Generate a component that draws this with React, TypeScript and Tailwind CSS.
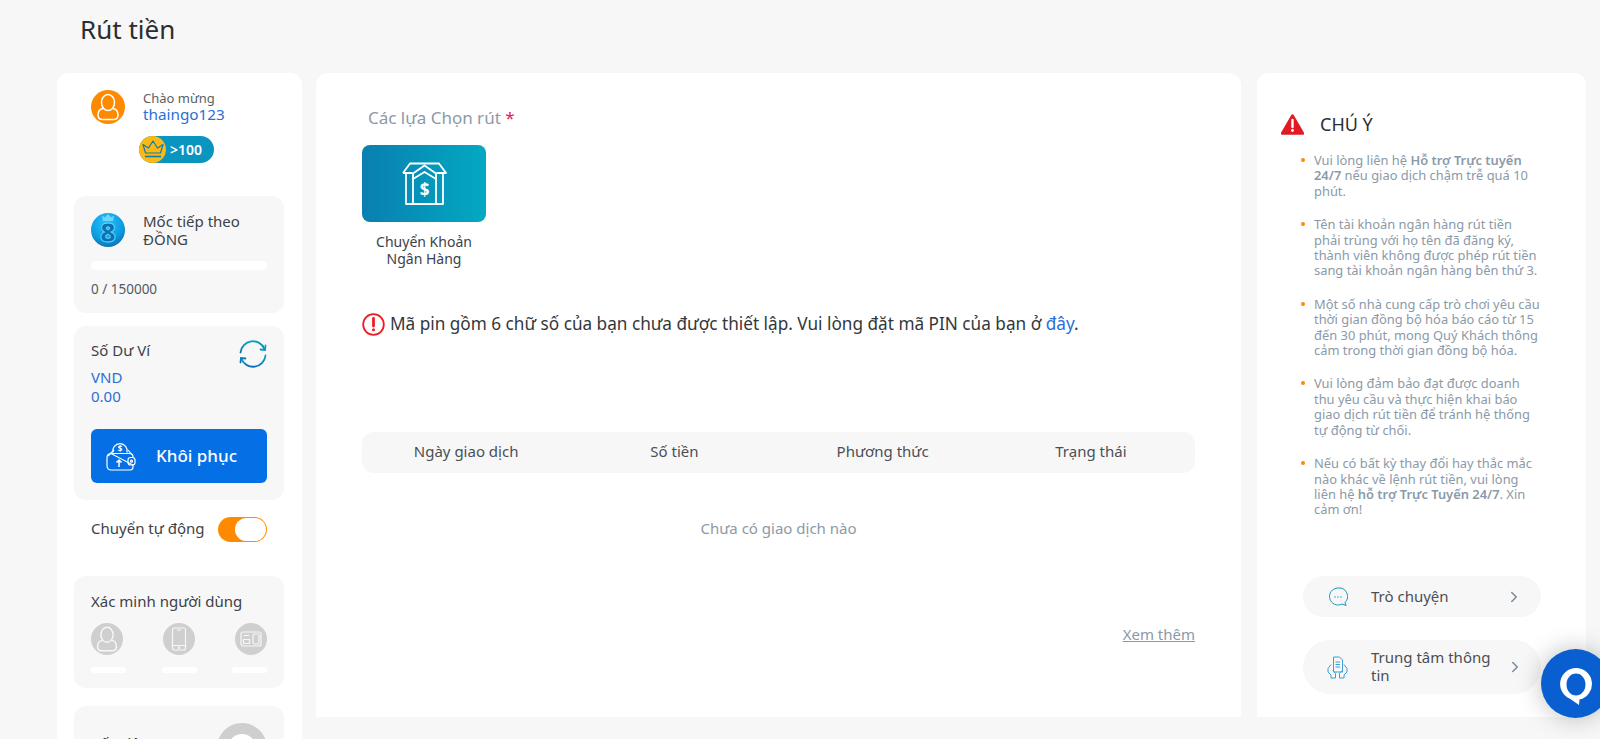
import { ChevronRight } from 'lucide-react';

const notes = [
  <>Vui lòng liên hệ <b className="font-semibold">Hỗ trợ Trực tuyến 24/7</b> nếu giao dịch chậm trễ quá 10 phút.</>,
  <>Tên tài khoản ngân hàng rút tiền phải trùng với họ tên đã đăng ký, thành viên không được phép rút tiền sang tài khoản ngân hàng bên thứ 3.</>,
  <>Một số nhà cung cấp trò chơi yêu cầu thời gian đồng bộ hóa báo cáo từ 15 đến 30 phút, mong Quý Khách thông cảm trong thời gian đồng bộ hóa.</>,
  <>Vui lòng đảm bảo đạt được doanh thu yêu cầu và thực hiện khai báo giao dịch rút tiền để tránh hệ thống tự động từ chối.</>,
  <>Nếu có bất kỳ thay đổi hay thắc mắc nào khác về lệnh rút tiền, vui lòng liên hệ <b className="font-semibold">hỗ trợ Trực Tuyến 24/7</b>. Xin cảm ơn!</>,
];

function UserIcon({ size = 34, color = 'white' }: { size?: number; color?: string }) {
  return (
    <svg width={size} height={size} viewBox="0 0 34 34" fill="none" stroke={color} strokeWidth="1.500">
      <ellipse cx="17" cy="12.500" rx="6.500" ry="8" />
      <path d="M12 18.500c-3 .5-5 3-5 6.500 0 3 2 4.500 4.500 4.500h11c2.500 0 4.500-1.500 4.500-4.500 0-3.500-2-6-5-6.500" />
    </svg>
  );
}

function BankIcon() {
  return (
    <svg width="45" height="43" viewBox="0 0 45 43" fill="none" stroke="white" strokeWidth="1.800" strokeLinejoin="round">
      <path d="M1 11L8 1.500h29L44 11h-9.500M1 11h9.500" />
      <path d="M4 11v31h37V11" />
      <path d="M11 42V11.500L22.500 3.500 34 11.500V42" />
      <path d="M11 17l11.500-7L34 17" />
      <text x="22.500" y="34" textAnchor="middle" fontSize="17" fontWeight="700" fill="white" stroke="none" fontFamily="Noto Sans, sans-serif">$</text>
    </svg>
  );
}

function WalletIcon() {
  return (
    <svg width="30" height="30" viewBox="0 0 30 30" fill="none" stroke="white" strokeWidth="1.200">
      <path d="M7 11.500a7.200 7.200 0 1 1 14 0" />
      <text x="14" y="10.500" textAnchor="middle" fontSize="8" fontWeight="700" fill="white" stroke="none" fontFamily="Noto Sans, sans-serif">$</text>
      <path d="M2 15l6-6M26 14l-4-5" />
      <path d="M5 12.500h19a3 3 0 0 1 3 3v1M27 24v2a3 3 0 0 1-3 3H5a4 4 0 0 1-4-4V16a4 4 0 0 1 4-3.500z" />
      <rect x="22" y="16.500" width="7" height="7.500" rx="2.500" />
      <circle cx="25.500" cy="20.200" r="1" />
      <path d="M13 26v-7M10.500 21.500L13 19l2.500 2.500" strokeWidth="1.500" />
    </svg>
  );
}

function RefreshIcon() {
  return (
    <svg width="28" height="28" viewBox="0 0 28 28" fill="none" stroke="url(#rf)" strokeWidth="1.800" strokeLinecap="round">
      <defs>
        <linearGradient id="rf" x1="0" y1="0" x2="0" y2="1">
          <stop offset="0" stopColor="#05a6c0" />
          <stop offset="1" stopColor="#0a6fb5" />
        </linearGradient>
      </defs>
      <path d="M1.500 12.500A12.500 12.500 0 0 1 25.500 9" />
      <path d="M26.500 15.500A12.500 12.500 0 0 1 2.500 19" />
      <path d="M21.500 9.500l4.500.5.500-4.500M6.500 18.500L2 18l-.5 4.500" />
    </svg>
  );
}

function Coin() {
  return (
    <div className="relative flex h-[34px] w-[34px] items-center justify-center rounded-full bg-[radial-gradient(circle_at_45%_30%,#22c4ff,#0d9be0_55%,#0a6aa8_85%,#07486f)]">
      <span className="mt-[3px] text-[27px] font-black leading-none text-[#0d6fb0] [-webkit-text-stroke:1px_#5fd2fb]">8</span>
      <svg width="12" height="7" viewBox="0 0 12 7" className="absolute left-[11px] top-[1px]" fill="#6fd6fb">
        <path d="M1 7L0 1.500l3 2L6 0l3 3.500 3-2L11 7z" />
      </svg>
    </div>
  );
}

export default function App() {
  return (
    <div className="h-screen overflow-hidden bg-[#f7f7f7] font-['Noto_Sans',sans-serif] text-[#3d4248]">
      <h1 className="pl-[80px] pt-[11px] h-[73px] text-[26px] leading-[36px] font-normal text-[#2a2e32]">Rút tiền</h1>
      <div className="flex items-start gap-[14px] pl-[57px]">
        {/* Sidebar */}
        <aside className="w-[245px] shrink-0 h-[700px] rounded-t-xl bg-white pl-[17px] pr-[18px]">
          <div className="flex h-[123px] gap-[18px] pl-[17px] pt-[17px]">
            <div className="h-[34px] w-[34px] rounded-full bg-[#ff8a00]">
              <UserIcon />
            </div>
            <div>
              <p className="text-[13px] leading-[17px] text-[#5a5f65]">Chào mừng</p>
              <p className="-mt-[2px] text-[15.3px] leading-[18px] text-[#2a6fd6]">thaingo123</p>
              <div className="mt-[13px] -ml-[4px] flex h-[27px] w-[75px] items-center rounded-full bg-[#0a94c0]">
                <div className="flex h-[27px] w-[27px] items-center justify-center rounded-full bg-[#fdb813]">
                  <svg width="22" height="19" viewBox="0 0 22 19" fill="none" stroke="#0a7fb0" strokeWidth="1.200" strokeLinejoin="round">
                    <path d="M3.500 13L1 4.500l5.500 3.500L11 1l4.500 7L21 4.500 18.500 13z" />
                    <path d="M3 16.500h16" strokeWidth="1.600" />
                  </svg>
                </div>
                <span className="ml-[4px] text-[14px] font-semibold text-white">&gt;100</span>
              </div>
            </div>
          </div>

          <section className="h-[117px] rounded-xl bg-[#f7f7f7] px-[17px] pt-[17px]">
            <div className="flex gap-[18px]">
              <Coin />
              <p className="-mt-[1px] text-[15px] leading-[18px]">Mốc tiếp theo<br />ĐỒNG</p>
            </div>
            <div className="mt-[13px] h-[9px] rounded-full bg-white" />
            <p className="mt-[10px] text-[13.5px] leading-[18px] text-[#55595e]">0 / 150000</p>
          </section>

          <section className="mt-[13px] h-[174px] rounded-xl bg-[#f7f7f7] px-[17px] pt-[14px]">
            <div className="flex justify-between">
              <p className="text-[15px] leading-[20px]">Số Dư Ví</p>
              <RefreshIcon />
            </div>
            <p className="text-[15px] leading-[19px] text-[#2a6fd6]">VND<br />0.00</p>
            <button className="mt-[23px] flex h-[54px] w-full items-center rounded-md bg-[#0570e6] pl-[15px] text-white">
              <WalletIcon />
              <span className="ml-[20px] text-[17px] font-medium">Khôi phục</span>
            </button>
          </section>

          <div className="flex h-[76px] items-start justify-between px-[17px] pt-[17px]">
            <span className="text-[15px] leading-[22px]">Chuyển tự động</span>
            <div className="flex h-[25px] w-[49px] justify-end rounded-full bg-[#ff8a00] p-[1px]">
              <div className="h-[23px] w-[31px] rounded-full bg-white" />
            </div>
          </div>

          <section className="h-[112px] rounded-xl bg-[#f7f7f7] px-[17px] pt-[14px]">
            <p className="text-[15px] leading-[22px]">Xác minh người dùng</p>
            <div className="mt-[11px] flex justify-between">
              <div className="h-[32px] w-[32px] rounded-full bg-[#cfcfcf]">
                <UserIcon size={32} color="#f7f7f7" />
              </div>
              <div className="flex h-[32px] w-[32px] items-center justify-center rounded-full bg-[#cfcfcf]">
                <svg width="16" height="24" viewBox="0 0 16 24" fill="none" stroke="#f7f7f7" strokeWidth="1.200">
                  <rect x="1.500" y="1" width="13" height="22" rx="2" />
                  <path d="M1.500 18.500h13M6 3h4" />
                  <circle cx="8" cy="20.800" r=".6" />
                </svg>
              </div>
              <div className="flex h-[32px] w-[32px] items-center justify-center rounded-full bg-[#cfcfcf]">
                <svg width="22" height="18" viewBox="0 0 22 18" fill="none" stroke="#f7f7f7" strokeWidth="1.200">
                  <rect x="1" y="2" width="20" height="14" rx="2" />
                  <rect x="13" y="4" width="6" height="10" rx="1.500" />
                  <path d="M3.500 5.500h6M3.500 9.500h6v4h-6z" />
                </svg>
              </div>
            </div>
            <div className="mt-[12px] flex justify-between">
              <div className="h-[6px] w-[35px] rounded-full bg-white" />
              <div className="h-[6px] w-[35px] rounded-full bg-white" />
              <div className="h-[6px] w-[35px] rounded-full bg-white" />
            </div>
          </section>

          <section className="mt-[18px] h-[120px] rounded-xl bg-[#f7f7f7] px-[17px] pt-[17px]">
            <div className="flex items-start justify-between">
              <p className="mt-[9px] text-[15px] leading-[22px]">Cấp độ VIP</p>
              <div className="h-[50px] w-[50px] rounded-full border-[11px] border-[#cfcfcf] bg-white" />
            </div>
          </section>
        </aside>

        {/* Main */}
        <main className="flex h-[644px] w-[925px] shrink-0 flex-col rounded-t-xl bg-white px-[46px]">
          <p className="mt-[33px] pl-[6px] text-[17px] leading-[24px] text-[#8b9aa8]">
            Các lựa Chọn rút <span className="text-[#e8175d]">*</span>
          </p>
          <div className="mt-[15px] w-[124px]">
            <div className="flex h-[77px] items-center justify-center rounded-lg bg-gradient-to-r from-[#0a7fb0] to-[#03a9c2]">
              <BankIcon />
            </div>
            <p className="mt-[11px] text-center text-[14px] leading-[17px]">Chuyển Khoản<br />Ngân Hàng</p>
          </div>
          <div className="mt-[45px] flex items-center gap-[5px]">
            <svg width="23" height="23" viewBox="0 0 23 23" fill="none" className="shrink-0">
              <circle cx="11.500" cy="11.500" r="10.300" stroke="#ef1c25" strokeWidth="1.800" />
              <path d="M11.500 5.500v7.500" stroke="#ef1c25" strokeWidth="2.800" strokeLinecap="round" />
              <circle cx="11.500" cy="16.800" r="1.500" fill="#ef1c25" />
            </svg>
            <p className="text-[17.2px] leading-[24px] text-[#33373b]">
              Mã pin gồm 6 chữ số của bạn chưa được thiết lập. Vui lòng đặt mã PIN của bạn ở <span className="text-[#2a6fd6]">đây</span>.
            </p>
          </div>
          <div className="mt-[96px] grid h-[41px] grid-cols-4 items-center rounded-xl bg-[#f7f7f7] pb-[2px] text-center text-[15px] text-[#4a4f55]">
            <span>Ngày giao dịch</span>
            <span>Số tiền</span>
            <span>Phương thức</span>
            <span>Trạng thái</span>
          </div>
          <p className="mt-[44px] text-center text-[15px] leading-[22px] text-[#8b9aa8]">Chưa có giao dịch nào</p>
          <p className="mt-[84px] text-right text-[15px] leading-[22px] text-[#8b9aa8] underline">Xem thêm</p>
        </main>

        {/* Notes */}
        <aside className="ml-[2px] flex h-[644px] w-[329px] shrink-0 flex-col rounded-t-xl bg-white pl-[24px]">
          <div className="mt-[40px] flex h-[22px] items-center gap-[16px]">
            <svg width="23" height="21" viewBox="0 0 23 21">
              <path d="M11.500 1.500L22 19.500H1z" fill="#e01b24" stroke="#e01b24" strokeWidth="2.500" strokeLinejoin="round" />
              <path d="M11.500 6v7" stroke="white" strokeWidth="2.400" strokeLinecap="round" />
              <circle cx="11.500" cy="16.500" r="1.400" fill="white" />
            </svg>
            <span className="text-[18px] text-[#2a2e32]">CHÚ Ý</span>
          </div>
          <ul className="mt-[18px] w-[260px] space-y-[18px] pl-[20px] text-[12.9px] leading-[15.4px] text-[#8b9aa8]">
            {notes.map((n, i) => (
              <li key={i} className="relative pl-[13px]">
                <span className="absolute left-0 top-[5px] h-[4px] w-[4px] rounded-full bg-[#ff8a00]" />
                {n}
              </li>
            ))}
          </ul>
          <div className="mt-auto mb-[23px] ml-[22px] w-[238px]">
            <div className="flex h-[41px] items-center rounded-full bg-[#f7f7f7] pl-[25px] pr-[18px]">
              <svg width="20" height="20" viewBox="0 0 20 20" fill="none" stroke="#1b95c9" strokeWidth="1">
                <path d="M10 1a8.500 8.500 0 1 0 4 16l4 1.500-1-3A8.500 8.500 0 0 0 10 1z" />
                <path d="M6.500 10h1M9.500 10h1M12.500 10h1" strokeWidth="1.400" />
              </svg>
              <span className="ml-[23px] flex-1 text-[15px] text-[#4a4f55]">Trò chuyện</span>
              <ChevronRight size={18} className="text-[#7a8a98]" />
            </div>
            <div className="mt-[23px] flex h-[54px] items-center rounded-full bg-[#f7f7f7] pl-[24px] pr-[17px]">
              <svg width="21" height="23" viewBox="0 0 21 23" fill="none" stroke="#3aa0d8" strokeWidth="1">
                <path d="M6.500 1h6l3 3v12h-9z" />
                <path d="M8.500 6h4.500M8.500 8.500h4.500M8.500 11h4.500" />
                <path d="M4 8.500L1 12.500v3.500l3 3v3h4.500v-4.500L6 14.500M17 8.500l3 4v3.500l-3 3v3h-4.500v-4.500L15 14.500" />
              </svg>
              <span className="ml-[23px] -mt-[2px] flex-1 text-[15px] leading-[18px] text-[#4a4f55]">Trung tâm thông tin</span>
              <ChevronRight size={18} className="text-[#7a8a98]" />
            </div>
          </div>
        </aside>
      </div>

      {/* Floating chat bubble */}
      <div className="fixed right-[-10px] top-[649px] flex h-[69px] w-[69px] items-start justify-center rounded-full bg-[#0a5fd0] pt-[19px] shadow-[0_0_24px_rgba(0,0,0,0.25)]">
        <svg width="32" height="37" viewBox="0 0 32 37">
          <path fillRule="evenodd" fill="white" d="M16 0a16 16 0 0 0-6 30.800L19 37l.5-5.400A16 16 0 0 0 16 0zm0 5.500c5.200 0 9.500 4.700 9.500 11s-4.300 11-9.500 11-9.500-4.700-9.500-11 4.300-11 9.500-11z" />
        </svg>
      </div>
    </div>
  );
}
